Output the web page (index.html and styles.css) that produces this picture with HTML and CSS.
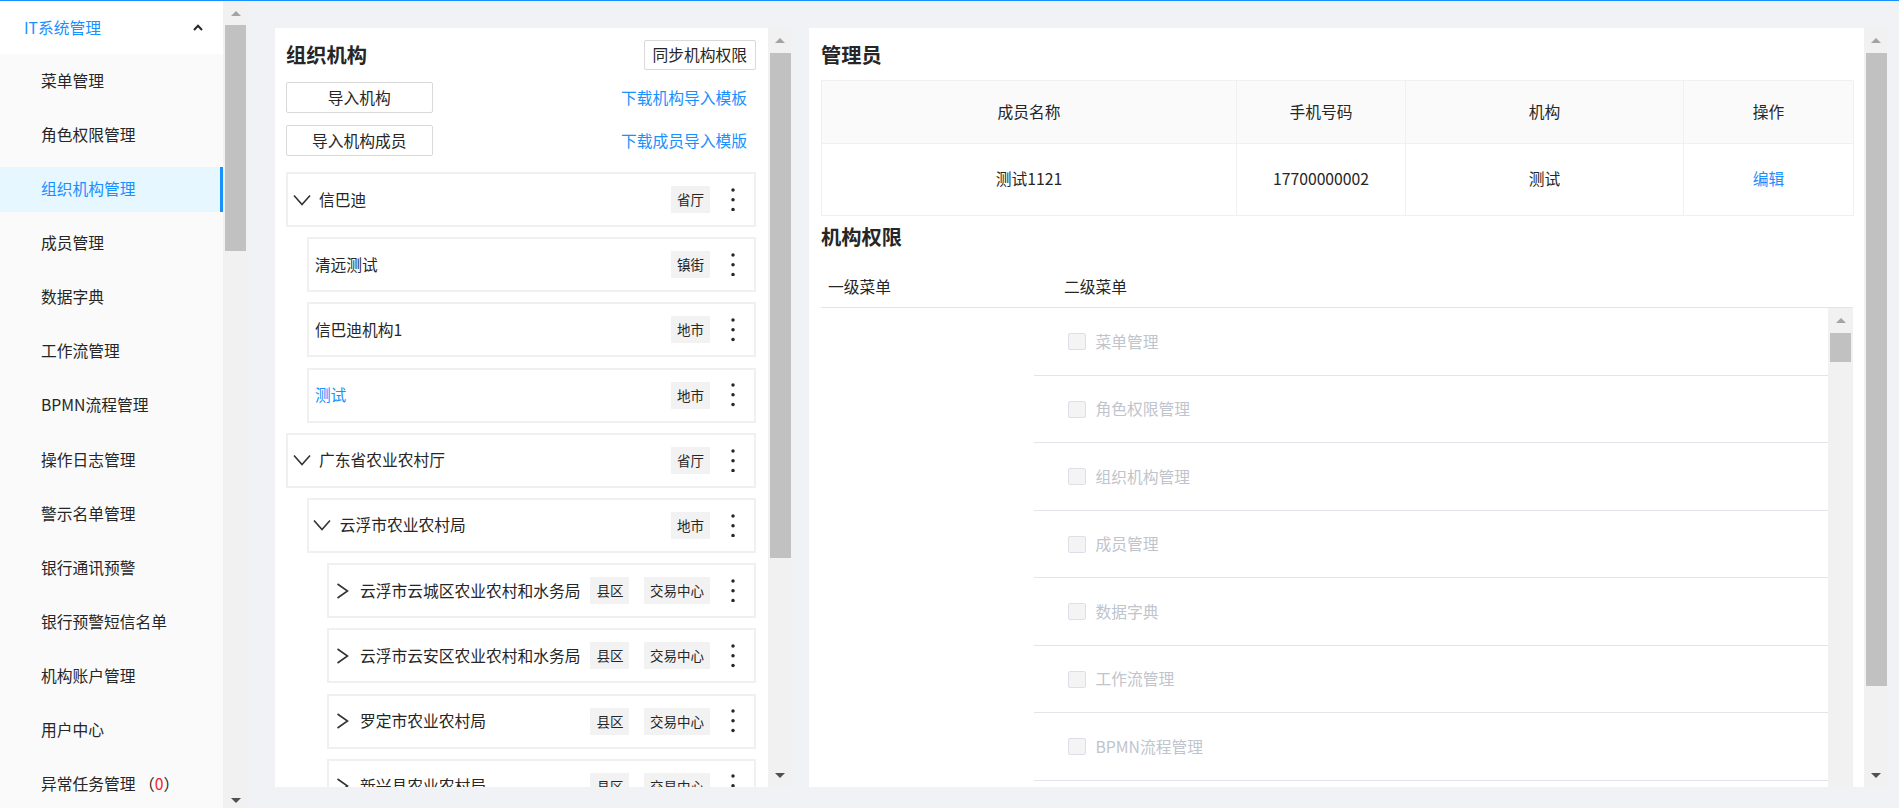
FILE: index.html
```html
<!DOCTYPE html>
<html lang="zh-CN">
<head>
<meta charset="utf-8">
<title>组织机构管理</title>
<link rel="stylesheet" href="styles.css">
</head>
<body>
<div class="topline"></div>
<div class="app">
  <aside class="sidebar">
    <nav class="menu">
      <div class="menu-head">
        <span>IT系统管理</span>
        <svg class="caret" viewBox="0 0 10 7"><polyline points="1,6 5,1.8 9,6"/></svg>
      </div>
      <ul class="menu-list">
        <li class="menu-item">菜单管理</li>
        <li class="menu-item">角色权限管理</li>
        <li class="menu-item active">组织机构管理</li>
        <li class="menu-item">成员管理</li>
        <li class="menu-item">数据字典</li>
        <li class="menu-item">工作流管理</li>
        <li class="menu-item">BPMN流程管理</li>
        <li class="menu-item">操作日志管理</li>
        <li class="menu-item">警示名单管理</li>
        <li class="menu-item">银行通讯预警</li>
        <li class="menu-item">银行预警短信名单</li>
        <li class="menu-item">机构账户管理</li>
        <li class="menu-item">用户中心</li>
        <li class="menu-item">异常任务管理 （<span class="count">0</span>）</li>
      </ul>
    </nav>
    <div class="sb sb-side">
      <div class="sb-btn"><i class="tri-up"></i></div>
      <div class="sb-track"><div class="sb-thumb"></div></div>
      <div class="sb-btn sb-btn-end"><i class="tri-down"></i></div>
    </div>
  </aside>

  <main class="main">
    <section class="card card-org">
      <div class="card-body org-body">
        <div class="head">
          <h2 class="title">组织机构</h2>
          <button class="btn btn-sync">同步机构权限</button>
        </div>
        <div class="btn-row">
          <button class="btn btn-wide">导入机构</button>
          <a class="link">下载机构导入模板</a>
        </div>
        <div class="btn-row">
          <button class="btn btn-wide">导入机构成员</button>
          <a class="link">下载成员导入模版</a>
        </div>

        <div class="tree">
          <div class="node lv0">
            <span class="arrow"><svg class="ic-down" viewBox="0 0 18 12"><polyline points="1,1.5 9,10.5 17,1.5"/></svg></span>
            <span class="name">信巴迪</span>
            <span class="tag">省厅</span>
            <span class="more"><svg viewBox="0 0 4 23.5"><circle cx="2" cy="1.9" r="1.75"/><circle cx="2" cy="11.75" r="1.75"/><circle cx="2" cy="21.6" r="1.75"/></svg></span>
          </div>
          <div class="node lv1 leaf">
            <span class="name">清远测试</span>
            <span class="tag">镇街</span>
            <span class="more"><svg viewBox="0 0 4 23.5"><circle cx="2" cy="1.9" r="1.75"/><circle cx="2" cy="11.75" r="1.75"/><circle cx="2" cy="21.6" r="1.75"/></svg></span>
          </div>
          <div class="node lv1 leaf">
            <span class="name">信巴迪机构1</span>
            <span class="tag">地市</span>
            <span class="more"><svg viewBox="0 0 4 23.5"><circle cx="2" cy="1.9" r="1.75"/><circle cx="2" cy="11.75" r="1.75"/><circle cx="2" cy="21.6" r="1.75"/></svg></span>
          </div>
          <div class="node lv1 leaf">
            <span class="name sel">测试</span>
            <span class="tag">地市</span>
            <span class="more"><svg viewBox="0 0 4 23.5"><circle cx="2" cy="1.9" r="1.75"/><circle cx="2" cy="11.75" r="1.75"/><circle cx="2" cy="21.6" r="1.75"/></svg></span>
          </div>
          <div class="node lv0">
            <span class="arrow"><svg class="ic-down" viewBox="0 0 18 12"><polyline points="1,1.5 9,10.5 17,1.5"/></svg></span>
            <span class="name">广东省农业农村厅</span>
            <span class="tag">省厅</span>
            <span class="more"><svg viewBox="0 0 4 23.5"><circle cx="2" cy="1.9" r="1.75"/><circle cx="2" cy="11.75" r="1.75"/><circle cx="2" cy="21.6" r="1.75"/></svg></span>
          </div>
          <div class="node lv1">
            <span class="arrow"><svg class="ic-down" viewBox="0 0 18 12"><polyline points="1,1.5 9,10.5 17,1.5"/></svg></span>
            <span class="name">云浮市农业农村局</span>
            <span class="tag">地市</span>
            <span class="more"><svg viewBox="0 0 4 23.5"><circle cx="2" cy="1.9" r="1.75"/><circle cx="2" cy="11.75" r="1.75"/><circle cx="2" cy="21.6" r="1.75"/></svg></span>
          </div>
          <div class="node lv2">
            <span class="arrow"><svg class="ic-right" viewBox="0 0 13 16"><polyline points="1.5,1 11.5,8 1.5,15"/></svg></span>
            <span class="name">云浮市云城区农业农村和水务局</span>
            <span class="tag">县区</span>
            <span class="tag">交易中心</span>
            <span class="more"><svg viewBox="0 0 4 23.5"><circle cx="2" cy="1.9" r="1.75"/><circle cx="2" cy="11.75" r="1.75"/><circle cx="2" cy="21.6" r="1.75"/></svg></span>
          </div>
          <div class="node lv2">
            <span class="arrow"><svg class="ic-right" viewBox="0 0 13 16"><polyline points="1.5,1 11.5,8 1.5,15"/></svg></span>
            <span class="name">云浮市云安区农业农村和水务局</span>
            <span class="tag">县区</span>
            <span class="tag">交易中心</span>
            <span class="more"><svg viewBox="0 0 4 23.5"><circle cx="2" cy="1.9" r="1.75"/><circle cx="2" cy="11.75" r="1.75"/><circle cx="2" cy="21.6" r="1.75"/></svg></span>
          </div>
          <div class="node lv2">
            <span class="arrow"><svg class="ic-right" viewBox="0 0 13 16"><polyline points="1.5,1 11.5,8 1.5,15"/></svg></span>
            <span class="name">罗定市农业农村局</span>
            <span class="tag">县区</span>
            <span class="tag">交易中心</span>
            <span class="more"><svg viewBox="0 0 4 23.5"><circle cx="2" cy="1.9" r="1.75"/><circle cx="2" cy="11.75" r="1.75"/><circle cx="2" cy="21.6" r="1.75"/></svg></span>
          </div>
          <div class="node lv2">
            <span class="arrow"><svg class="ic-right" viewBox="0 0 13 16"><polyline points="1.5,1 11.5,8 1.5,15"/></svg></span>
            <span class="name">新兴县农业农村局</span>
            <span class="tag">县区</span>
            <span class="tag">交易中心</span>
            <span class="more"><svg viewBox="0 0 4 23.5"><circle cx="2" cy="1.9" r="1.75"/><circle cx="2" cy="11.75" r="1.75"/><circle cx="2" cy="21.6" r="1.75"/></svg></span>
          </div>
        </div>
      </div>
      <div class="sb sb-org">
        <div class="sb-btn"><i class="tri-up"></i></div>
        <div class="sb-track"><div class="sb-thumb"></div></div>
        <div class="sb-btn"><i class="tri-down"></i></div>
      </div>
    </section>

    <section class="card card-admin">
      <div class="card-body admin-body">
        <div class="head">
          <h2 class="title">管理员</h2>
        </div>
        <div class="admin-table">
          <div class="cell th">成员名称</div>
          <div class="cell th">手机号码</div>
          <div class="cell th">机构</div>
          <div class="cell th">操作</div>
          <div class="cell td">测试1121</div>
          <div class="cell td">17700000002</div>
          <div class="cell td">测试</div>
          <div class="cell td"><a class="link-plain">编辑</a></div>
        </div>
        <h2 class="title title2">机构权限</h2>
        <div class="perm-head">
          <div class="ph1">一级菜单</div>
          <div class="ph2">二级菜单</div>
        </div>
        <div class="perm-body">
          <div class="pcol1"></div>
          <div class="pcol2">
            <div class="prow"><span class="cb"></span>菜单管理</div>
            <div class="prow"><span class="cb"></span>角色权限管理</div>
            <div class="prow"><span class="cb"></span>组织机构管理</div>
            <div class="prow"><span class="cb"></span>成员管理</div>
            <div class="prow"><span class="cb"></span>数据字典</div>
            <div class="prow"><span class="cb"></span>工作流管理</div>
            <div class="prow"><span class="cb"></span>BPMN流程管理</div>
            <div class="prow"><span class="cb"></span>操作日志管理</div>
          </div>
          <div class="sb sb-perm">
            <div class="sb-btn"><i class="tri-up"></i></div>
            <div class="sb-track"><div class="sb-thumb"></div></div>
            <div class="sb-btn"><i class="tri-down"></i></div>
          </div>
        </div>
      </div>
      <div class="sb sb-admin">
        <div class="sb-btn"><i class="tri-up"></i></div>
        <div class="sb-track"><div class="sb-thumb"></div></div>
        <div class="sb-btn"><i class="tri-down"></i></div>
      </div>
    </section>
  </main>
</div>
</body>
</html>
```

FILE: styles.css
```css
* { box-sizing: border-box; margin: 0; padding: 0; }

body {
  width: 1899px;
  height: 808px;
  overflow: hidden;
  background: #f0f2f5;
  font-family: "Noto Sans CJK SC", "Noto Sans", sans-serif;
  font-size: 15.75px;
  line-height: 22px;
  color: #262626;
}

.topline { height: 1px; background: #1890ff; }

.app { display: flex; height: 807px; }

/* ---------- sidebar ---------- */
.sidebar { display: flex; width: 248px; flex-shrink: 0; }

.menu { width: 223px; background: #fafafa; overflow: hidden; }

.menu-head {
  height: 53px;
  background: #fff;
  display: flex;
  align-items: center;
  justify-content: space-between;
  padding: 0 20px 0 24px;
  color: #1890ff;
}

.caret { width: 10px; height: 7px; fill: none; stroke: #262626; stroke-width: 2; }

.menu-list { list-style: none; padding-top: 4.5px; }

.menu-item {
  height: 45px;
  margin-bottom: 9.08px;
  padding-left: 41px;
  display: flex;
  align-items: center;
  white-space: nowrap;
  color: #262626;
}

.menu-item.active {
  background: #e6f7ff;
  color: #1890ff;
  border-right: 3px solid #1890ff;
}

.count { color: #f5222d; }

/* ---------- fake scrollbars ---------- */
.sb {
  width: 23px;
  flex-shrink: 0;
  background: #f1f1f1;
  display: flex;
  flex-direction: column;
}

.sb-btn {
  height: 24px;
  flex-shrink: 0;
  display: flex;
  align-items: center;
  justify-content: center;
}

.tri-up {
  display: block;
  width: 0; height: 0;
  border-left: 5px solid transparent;
  border-right: 5px solid transparent;
  border-bottom: 5px solid #a3a3a3;
}

.tri-down {
  display: block;
  width: 0; height: 0;
  border-left: 5px solid transparent;
  border-right: 5px solid transparent;
  border-top: 5px solid #505050;
}

.sb-track { flex: 1; padding: 1px 0 0 2px; overflow: hidden; }
.sb-thumb { width: 21px; background: #c1c1c1; }

.sb-side { width: 25px; }
.sb-side .sb-track { padding-top: 0; }
.sb-side .sb-thumb { height: 226px; }
.sb-side .sb-btn-end { align-items: flex-end; padding-bottom: 5px; }

.sb-org .sb-thumb { height: 505px; }
.sb-admin .sb-thumb { height: 633px; }
.sb-perm { width: 25px; }
.sb-perm .sb-thumb { height: 29px; }

/* ---------- main ---------- */
.main {
  flex: 1;
  min-width: 0;
  display: flex;
  gap: 18px;
  padding: 27px 12px 21px 27px;
}

.card {
  height: 759px;
  background: #fff;
  display: flex;
  overflow: hidden;
}

.card-org { width: 516px; flex-shrink: 0; }
.card-admin { flex: 1; min-width: 0; }

.card-body { flex: 1; min-width: 0; overflow: hidden; }

.head {
  height: 30px;
  display: flex;
  align-items: center;
  justify-content: space-between;
}

.title { font-size: 20.25px; font-weight: 700; line-height: 30px; }

.btn {
  height: 30px;
  border: 1px solid #d9d9d9;
  border-radius: 2px;
  background: #fff;
  font: inherit;
  color: #262626;
  display: flex;
  align-items: center;
  justify-content: center;
  white-space: nowrap;
}

.btn-sync { width: 111.5px; }

.btn-row {
  margin-top: 12px;
  height: 31px;
  display: flex;
  align-items: center;
  justify-content: space-between;
}

.btn-wide { width: 146.5px; height: 31px; }

.link { color: #1890ff; margin-right: 8.5px; }
.link-plain { color: #1890ff; }

/* ---------- org tree ---------- */
.org-body { padding: 12px 12.5px 0 11px; }

.tree { margin-top: 16px; }

.node {
  height: 55px;
  border: 2px solid #f0f0f0;
  margin-bottom: 10.2px;
  display: flex;
  align-items: center;
  padding: 0 10px 0 4.5px;
}

.lv1 { margin-left: 20.7px; }
.lv2 { margin-left: 41px; }

.arrow {
  width: 18px;
  flex-shrink: 0;
  margin-right: 8.5px;
  display: flex;
  align-items: center;
  justify-content: center;
}

.arrow svg { fill: none; stroke: #333; stroke-width: 1.6; }
.ic-down { width: 18px; height: 12px; }
.ic-right { width: 13px; height: 16px; }

.name { flex: 1; min-width: 0; white-space: nowrap; overflow: hidden; }
.leaf .name { margin-left: 1.7px; }
.name.sel { color: #1890ff; }

.tag {
  flex-shrink: 0;
  height: 27px;
  padding: 0 6px;
  margin-left: 10px;
  background: #f2f2f2;
  font-size: 13.5px;
  line-height: 27px;
  white-space: nowrap;
}

.tag + .tag { margin-left: 14.6px; }

.more {
  width: 22px;
  flex-shrink: 0;
  margin-left: 11.5px;
  display: flex;
  justify-content: center;
}

.more svg { width: 4px; height: 23.5px; fill: #262626; }

/* ---------- admin card ---------- */
.admin-body { padding: 12px 11px 0 12px; }

.admin-table {
  margin-top: 10.3px;
  display: grid;
  grid-template-columns: 415px 169px 278px 170px;
  border-top: 1px solid #f0f0f0;
  border-left: 1px solid #f0f0f0;
}

.cell {
  display: flex;
  align-items: center;
  justify-content: center;
  border-right: 1px solid #f0f0f0;
  border-bottom: 1px solid #f0f0f0;
}

.th { height: 62.4px; background: #fafafa; }
.td { height: 72.6px; }

.title2 { margin-top: 6px; }

.perm-head {
  height: 56px;
  display: flex;
  align-items: flex-end;
  padding-bottom: 9.5px;
  border-bottom: 1px solid #e4e3ea;
}

.ph1 { width: 213px; padding-left: 7px; }
.ph2 { padding-left: 30px; }

.perm-body { height: 494px; display: flex; overflow: hidden; }

.pcol1 { width: 213px; flex-shrink: 0; }
.pcol2 { flex: 1; min-width: 0; }

.prow {
  height: 67.5px;
  border-bottom: 1px solid #e4e3ea;
  display: flex;
  align-items: center;
  padding-left: 34px;
  color: #c0c4cc;
  white-space: nowrap;
}

.cb {
  width: 17.5px;
  height: 17px;
  margin-right: 10px;
  border: 1px solid #dcdfe6;
  border-radius: 2px;
  background: #f4f4f5;
  flex-shrink: 0;
}
```
